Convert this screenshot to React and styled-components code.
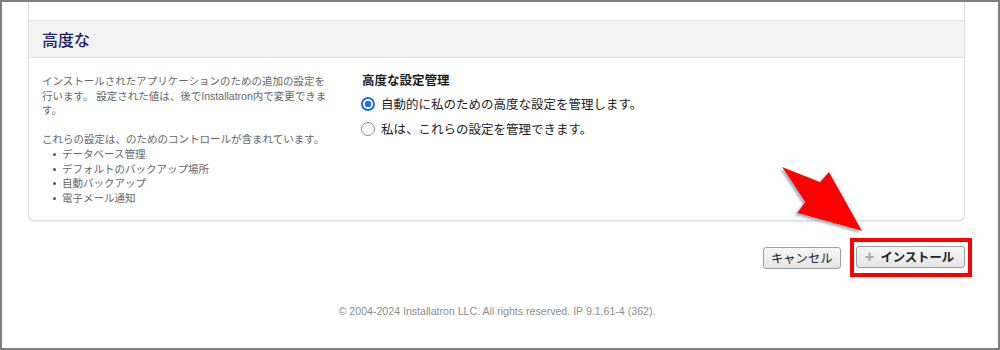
import React from "react";
import styled, { createGlobalStyle } from "styled-components";

const GlobalStyle = createGlobalStyle`
  html, body { margin: 0; padding: 0; background: #fff; }
  body { font-family: "Liberation Sans", "Noto Sans CJK JP", sans-serif; }
  * { box-sizing: border-box; }
`;

const Frame = styled.div`
  position: relative;
  width: 1000px;
  height: 350px;
  border: 2px solid #7f7f7f;
  overflow: hidden;
  display: flex;
  flex-direction: column;
`;

const Card = styled.section`
  margin-left: 26px;
  width: 937px;
  border: 1px solid #d9dde2;
  border-top: none;
  border-radius: 0 0 6px 6px;
  box-shadow: 0 1px 1px rgba(120, 140, 160, 0.18);
  background: #fff;
`;

const TopFill = styled.div`
  height: 18px;
`;

const Header = styled.h2`
  margin: 0;
  height: 38px;
  display: flex;
  align-items: center;
  padding: 0 0 1px 13px;
  background: #f3f3f3;
  border-top: 1px solid #e3e3e3;
  border-bottom: 1px solid #e3e3e3;
  font-size: 16px;
  font-weight: 500;
  color: #1c2262;
`;

const Body = styled.div`
  display: flex;
  gap: 30px;
  padding: 16px 13px 15px 13px;
`;

const Description = styled.div`
  width: 290px;
  font-size: 10.5px;
  line-height: 14.6px;
  color: #666;
  white-space: nowrap;
`;

const Para = styled.p`
  margin: 0 0 14.6px 0;
`;

const BulletList = styled.ul`
  margin: 0;
  padding: 0 0 0 20px;
  list-style: none;
`;

const Bullet = styled.li`
  position: relative;
  &::before {
    content: "";
    position: absolute;
    left: -9px;
    top: 6px;
    width: 3px;
    height: 3px;
    border-radius: 50%;
    background: #555;
  }
`;

const Settings = styled.div`
  display: flex;
  flex-direction: column;
`;

const SettingsTitle = styled.div`
  font-size: 12.5px;
  font-weight: bold;
  color: #1a1a1a;
  line-height: 15px;
  margin-bottom: 2px;
`;

const RadioRow = styled.label`
  display: flex;
  align-items: center;
  gap: 6px;
  height: 25px;
  font-size: 12.5px;
  color: #1e1e1e;
  margin-left: -1px;
`;

const Radio = styled.input.attrs({ type: "radio" })`
  appearance: none;
  margin: 0;
  width: 14px;
  height: 14px;
  border-radius: 50%;
  border: 1px solid #8c8c8c;
  background: #fff;
  &:checked {
    border: 2px solid #1a6ef5;
    background: radial-gradient(circle, #1a6ef5 0 3px, #fff 3.5px);
  }
`;

const Actions = styled.div`
  display: flex;
  justify-content: flex-end;
  align-items: center;
  gap: 9px;
  margin: 17px 26px 0 0;
`;

const Button = styled.button`
  height: 22px;
  display: inline-flex;
  align-items: center;
  gap: 6px;
  padding: 0 ${(p) => (p.$primary ? "10px 0 8px" : "7px")};
  border: 1px solid #9d9d9d;
  border-radius: 3px;
  background: linear-gradient(#f7f7f7, #e4e4e4);
  font-family: "Liberation Sans", "Noto Sans CJK JP", sans-serif;
  font-size: 12.3px;
  font-weight: ${(p) => (p.$primary ? "bold" : "normal")};
  color: #222;
  cursor: pointer;
`;

const PlusIcon = styled.span`
  color: #a9a9a9;
  font-size: 17px;
  font-weight: bold;
  line-height: 1;
  margin-top: -1px;
`;

const Highlight = styled.div`
  border: 4px solid #ff0000;
  padding: 4px 3px 5px 2px;
`;

const Footer = styled.footer`
  margin-top: 28px;
  text-align: center;
  font-size: 10.6px;
  color: #8c8c8c;
  padding-right: 6px;
`;

const ArrowSvg = styled.svg`
  position: absolute;
  left: 0;
  top: 0;
  pointer-events: none;
`;

export default function App() {
  return (
    <>
      <GlobalStyle />
      <Frame>
        <Card>
          <TopFill />
          <Header>高度な</Header>
          <Body>
            <Description>
              <Para>
                インストールされたアプリケーションのための追加の設定を
                <br />
                行います。 設定された値は、後でInstallatron内で変更できま
                <br />
                す。
              </Para>
              <div>これらの設定は、のためのコントロールが含まれています。</div>
              <BulletList>
                <Bullet>データベース管理</Bullet>
                <Bullet>デフォルトのバックアップ場所</Bullet>
                <Bullet>自動バックアップ</Bullet>
                <Bullet>電子メール通知</Bullet>
              </BulletList>
            </Description>
            <Settings>
              <SettingsTitle>高度な設定管理</SettingsTitle>
              <RadioRow>
                <Radio name="adv" defaultChecked />
                自動的に私のための高度な設定を管理します。
              </RadioRow>
              <RadioRow>
                <Radio name="adv" />
                私は、これらの設定を管理できます。
              </RadioRow>
            </Settings>
          </Body>
        </Card>
        <Actions>
          <Button>キャンセル</Button>
          <Highlight>
            <Button $primary>
              <PlusIcon>+</PlusIcon>
              インストール
            </Button>
          </Highlight>
        </Actions>
        <Footer>© 2004-2024 Installatron LLC. All rights reserved. IP 9.1.61-4 (362).</Footer>
        <ArrowSvg width="996" height="346" viewBox="2 2 996 346">
          <defs>
            <filter id="shadow" x="-20%" y="-20%" width="140%" height="140%">
              <feDropShadow dx="-2" dy="2" stdDeviation="1.3" floodColor="#8fb0c4" floodOpacity="0.9" />
            </filter>
          </defs>
          <polygon
            points="782,167 820,182 829,172 862,231 797,213 805,202"
            fill="#ff0000"
            filter="url(#shadow)"
          />
        </ArrowSvg>
      </Frame>
    </>
  );
}
